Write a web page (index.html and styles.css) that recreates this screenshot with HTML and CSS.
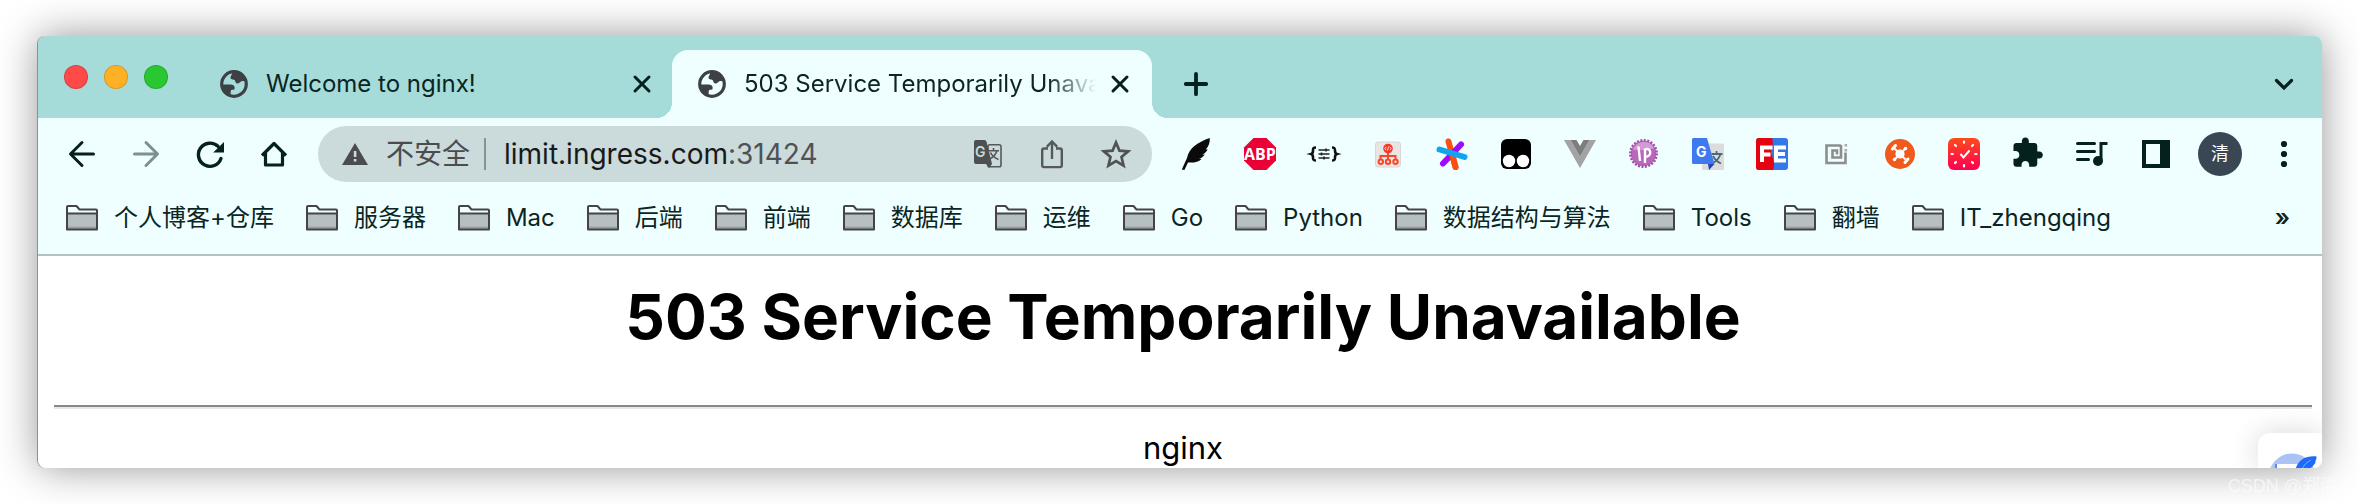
FILE: index.html
```
<!DOCTYPE html>
<html lang="zh-CN">
<head>
<meta charset="utf-8">
<title>503 Service Temporarily Unavailable</title>
<link rel="stylesheet" href="styles.css">
</head>
<body>
<svg class="defs" aria-hidden="true">
  <defs>
    <symbol id="globe" viewBox="0 0 28 28">
      <circle cx="14" cy="14" r="12.3" fill="none" stroke="#3d4044" stroke-width="3.2"/>
      <path fill="#3d4044" d="M12 1.500C13 4 11 5 10.500 7.500 10.500 9.500 13 9.500 14.500 10c1 .6.6 2.500 2 3.200 2 .8 3-.6 4.500-1.700 1.500-.8 4-.5 5.500.5C26 7 21 1.500 12 1.500z"/>
      <path fill="#3d4044" d="M1.500 14.500h9c2.500 0 4 1 4.200 3.200.2 1.700-1 2-2.500 2-1.400.1-1.500 1.200-1.500 2.300 0 1.500-.5 2-.2 4.500C5 26 1.200 20 1.500 14.500z"/>
    </symbol>
    <symbol id="cross" viewBox="0 0 40 40"><path d="M13 13l14 14M27 13L13 27" fill="none" stroke="#04211f" stroke-width="3" stroke-linecap="round"/></symbol>
    <symbol id="folder" viewBox="0 0 32 26">
      <path d="M1 8.500h30v15.500H1z" fill="#b7c0c0"/>
      <path d="M1 21.500h30v3H1z" fill="#9aa3a3"/>
      <path d="M1 24.500V2q0-1 1-1h8.500l3 3.500H30q1 0 1 1v19H1zM1 8.500h30" fill="none" stroke="#474449" stroke-width="2" stroke-linejoin="round"/>
    </symbol>
  </defs>
</svg>

<div class="window">
  <div class="tabstrip">
    <div class="lights">
      <button class="light red" aria-label="关闭窗口"></button>
      <button class="light yellow" aria-label="最小化"></button>
      <button class="light green" aria-label="全屏"></button>
    </div>
    <div class="tab idle">
      <svg class="favicon"><use href="#globe"/></svg>
      <span class="tab-title">Welcome to nginx!</span>
      <button class="close" aria-label="关闭标签页"><svg class="icon"><use href="#cross"/></svg></button>
    </div>
    <div class="tab active">
      <svg class="favicon"><use href="#globe"/></svg>
      <span class="tab-title">503 Service Temporarily Unavailable</span>
      <button class="close" aria-label="关闭标签页"><svg class="icon"><use href="#cross"/></svg></button>
    </div>
    <button class="tool add" aria-label="新标签页"><svg class="icon" viewBox="0 0 40 40"><path d="M20 9.800v20.400M9.800 20h20.400" stroke="#04211f" stroke-width="3.800" stroke-linecap="round"/></svg></button>
    <button class="tool" aria-label="搜索标签页"><svg class="icon" viewBox="0 0 40 40"><path d="M12.500 16.500l7.500 7.500 7.500-7.500" fill="none" stroke="#04211f" stroke-width="3.200" stroke-linecap="round"/></svg></button>
  </div>

  <div class="toolbar">
    <div class="group">
      <button class="tool" aria-label="后退"><svg class="icon" viewBox="0 0 40 40"><path d="M31.500 20H9M20 8.500L8.500 20 20 31.500" fill="none" stroke="#04211f" stroke-width="3" stroke-linecap="round" stroke-linejoin="round"/></svg></button>
      <button class="tool" aria-label="前进"><svg class="icon" viewBox="0 0 40 40"><path d="M8.500 20H31M20 8.500L31.500 20 20 31.500" fill="none" stroke="#7b918f" stroke-width="3" stroke-linecap="round" stroke-linejoin="round"/></svg></button>
      <button class="tool" aria-label="重新加载"><svg class="icon" viewBox="0 0 40 40"><path d="M31 24.500A11.600 11.600 0 1 1 28 12.300" fill="none" stroke="#04211f" stroke-width="3.400" stroke-linecap="round"/><path d="M34 8v10.500H23.200z" fill="#04211f"/></svg></button>
      <button class="tool" aria-label="主页"><svg class="icon" viewBox="0 0 40 40"><path d="M8 21.500L20 9.500l12 12M11.500 19v12h17V19" fill="none" stroke="#04211f" stroke-width="3.200" stroke-linejoin="round"/></svg></button>
    </div>

    <div class="address">
      <svg class="warn" viewBox="0 0 26 22"><path d="M13 0l13 22H0z" fill="#4b4c4f"/><path d="M11.800 8h2.600v6h-2.600zM11.800 16h2.600v2.600h-2.600z" fill="#cbdada"/></svg>
      <span class="secure">不安全</span>
      <span class="url" role="textbox" aria-label="地址栏" contenteditable="true" spellcheck="false">limit.ingress.com<span class="port">:31424</span></span>
      <button class="tool" aria-label="翻译"><svg class="icon" viewBox="0 0 40 40"><rect x="20" y="10.800" width="13" height="22" rx="1.800" fill="none" stroke="#56595b" stroke-width="1.600"/><path d="M8 6h8.500q1.500 0 2 1.500l5.500 22.500-3 4-3-4H8q-2 0-2-2V8q0-2 2-2z" fill="#4d5052"/><text x="7" y="22.500" font-size="14" font-weight="600" fill="#cbdada" class="glyph">G</text><path d="M20 16.800h11M25.500 14v2.800M28.800 17c-1.200 4-4 6.500-7.500 8.500M22.500 18.500c1.500 3.500 4 5.500 8 7" fill="none" stroke="#56595b" stroke-width="1.600"/></svg></button>
      <button class="tool" aria-label="分享"><svg class="icon" viewBox="0 0 40 40"><path d="M16 14.500h-4q-1.800 0-1.800 1.800v15q0 1.800 1.800 1.800h16q1.800 0 1.800-1.800v-15q0-1.800-1.800-1.800h-4M20 25V8M14.800 12.800L20 7.500l5.200 5.300" fill="none" stroke="#56595b" stroke-width="2.400"/></svg></button>
      <button class="tool" aria-label="收藏"><svg class="icon" viewBox="0 0 40 40"><path d="M20 8.500l3.400 8.100 8.800.7-6.700 5.700 2.100 8.600-7.600-4.600-7.600 4.600 2.100-8.600-6.700-5.700 8.800-.7z" fill="none" stroke="#505355" stroke-width="2.700"/></svg></button>
    </div>

    <div class="group">
      <button class="tool" aria-label="羽毛"><svg class="icon" viewBox="0 0 40 40"><path d="M33.800 4C22 8 13 14 11 24L5.800 35.500l2.600.5 3.600-7.500c6 .5 10.500-.5 13.500-3.500l-2.500-.3c2.500-.6 4-1.800 5.800-4.200l-2.700.1c2.500-1 4.500-2.600 5.600-5.300l-2 .2C32.800 12.500 34 8.500 33.800 4z" fill="#0a0a0a"/></svg></button>
      <button class="tool" aria-label="Adblock Plus"><svg class="icon" viewBox="0 0 40 40"><path d="M13.500 4h13L36 13.500v13L26.500 36h-13L4 26.500v-13z" fill="#eb0035"/><text x="20" y="26" text-anchor="middle" font-size="16" font-weight="700" fill="#fff" class="glyph narrow">ABP</text></svg></button>
      <button class="tool" aria-label="JSON"><svg class="icon" viewBox="0 0 40 40"><path d="M12 13.500c-3 0-3 1-3 3s0 3-1.800 3.500C9 20.500 9 21.500 9 23.500s0 3 3 3M28 13.500c3 0 3 1 3 3s0 3 1.800 3.500c-1.800.5-1.800 1.500-1.800 3.500s0 3-3 3" fill="none" stroke="#111" stroke-width="2.600"/><path d="M14.500 16h11M14.500 20h11M14.500 24h11M22 14.500v3M17.500 18.500v3M20 22.500v3" stroke="#222" stroke-width="1.600"/></svg></button>
      <button class="tool" aria-label="网站导航"><svg class="icon" viewBox="0 0 40 40"><rect x="7.500" y="8" width="25" height="25" rx="2.500" fill="#e9e5e4" stroke="#d6d6d6"/><g fill="none" stroke="#f4492a" stroke-width="2"><path d="M20 18v8M12.500 26v-4h15v4"/><circle cx="12.800" cy="27.800" r="2.200"/><circle cx="20" cy="27.800" r="2.200"/><circle cx="27.500" cy="27.800" r="2.200"/></g><circle cx="20" cy="14.500" r="4.800" fill="#f4392a"/><path d="M18.200 12.800L16.800 14.500l1.400 1.700M21.800 12.800l1.400 1.700-1.400 1.700M20.600 12.500l-1.200 4" stroke="#fff" stroke-width=".8" fill="none"/></svg></button>
      <button class="tool" aria-label="星形"><svg class="icon" viewBox="0 0 40 40"><g stroke-width="6" stroke-linecap="round"><path d="M16.500 7.500l7 25.500" stroke="#ff4e14"/><path d="M11 29.500L29 10.500" stroke="#9e09fb"/><path d="M20 20l3.500 13" stroke="#ff4e14"/><path d="M7.500 15.500L32.500 23" stroke="#13a4ee"/></g></svg></button>
      <button class="tool" aria-label="Tampermonkey"><svg class="icon" viewBox="0 0 40 40"><rect x="5" y="5" width="30" height="30" rx="6" fill="#000"/><circle cx="13" cy="27" r="6.200" fill="#fff"/><circle cx="27" cy="27" r="6.200" fill="#fff"/></svg></button>
      <button class="tool" aria-label="Vue"><svg class="icon" viewBox="0 0 40 40"><path d="M4 6h6.500L20 22.500 29.500 6H36L20 34z" fill="#a3a3a3"/><path d="M10.500 6h6L20 12l3.500-6h6L20 22.500z" fill="#7d7d7d"/></svg></button>
      <button class="tool" aria-label="IP"><svg class="icon" viewBox="0 0 40 40"><circle cx="19.500" cy="19.500" r="12.700" fill="#b966bb"/><circle cx="19.500" cy="19.500" r="13.200" fill="none" stroke="#a053a4" stroke-width="2.600" stroke-dasharray="2 1.450"/><path d="M9 16a11.500 11.500 0 0 1 21-2c-7 4-14 1-21 2z" fill="#d49ad5"/><path d="M14.500 12.500l1.500 14.500M21 29V15.500c6-2.500 8 7 0 7.500" fill="none" stroke="#fff" stroke-width="2.400"/></svg></button>
      <button class="tool" aria-label="谷歌翻译"><svg class="icon" viewBox="0 0 40 40"><rect x="14" y="9.500" width="22" height="26.500" rx="1.500" fill="#dcdcdc"/><path d="M23.500 20h11M28.500 17v3M32.500 20c-1.500 5-4 7-7.500 9M25 22c2 4 4.500 6 8 7.500" fill="none" stroke="#4c6b78" stroke-width="1.800"/><path d="M20 30h6.500l-5.500 6z" fill="#2246b5"/><path d="M5.500 4H19l7.500 26h-21Q4 30 4 28.500v-23Q4 4 5.500 4z" fill="#4079ee"/><text x="8" y="22.500" font-size="14" font-weight="700" fill="#fff" class="glyph">G</text></svg></button>
      <button class="tool" aria-label="FeHelper"><svg class="icon" viewBox="0 0 40 40"><rect x="4" y="4" width="32" height="32" rx="3" fill="#3377e8"/><path d="M7 4h13c3 8-3 12 0 18 2 5 3 9 1 14H7q-3 0-3-3V7q0-3 3-3z" fill="#e4030f"/><path d="M10 28V13.500h10.500M10 20.500h8.500M34 13.500H24v13h10M24 20h9" fill="none" stroke="#fff" stroke-width="4"/></svg></button>
      <button class="tool" aria-label="方框"><svg class="icon" viewBox="0 0 40 40"><path d="M25 11.500H10.500v17.500h19V18.500M25 11v12.500h-8.500v-7H21v4" fill="none" stroke="#8d8d8d" stroke-width="2.600"/><path d="M28.500 10h2.600v2.600h-2.600zM28.500 15h2.600v2.600h-2.600z" fill="#aaa"/></svg></button>
      <button class="tool" aria-label="无人机"><svg class="icon" viewBox="0 0 40 40"><circle cx="20" cy="20" r="15" fill="#f05a1c"/><circle cx="20" cy="20" r="4.600" fill="#fff"/><path d="M14.500 14.500l11 11M25.500 14.500l-11 11" stroke="#fff" stroke-width="2"/><path d="M12.500 15l3-3.500M25 28.500l3-3.500" stroke="#fff" stroke-width="3" stroke-linecap="round"/><circle cx="25.500" cy="14.500" r="1.800" fill="#fff"/><circle cx="14.500" cy="25.500" r="1.800" fill="#fff"/></svg></button>
      <button class="tool" aria-label="时钟"><svg class="icon" viewBox="0 0 40 40"><defs><linearGradient id="clock" x2="0" y2="1"><stop offset="0" stop-color="#ff4a1c"/><stop offset="1" stop-color="#fd0052"/></linearGradient></defs><rect x="4" y="4" width="32" height="32" rx="6" fill="url(#clock)"/><path d="M20 7.500v1.300M20 31.200v1.300M7.500 20h1.300M31.200 20h1.300M11 11l1 1M28 28l1 1M29 11l-1 1M12 28l-1 1" stroke="#fff" stroke-width="2.200" stroke-linecap="round"/><path d="M16.500 20l3 3.500 6-7" fill="none" stroke="#fff" stroke-width="2"/></svg></button>
      <button class="tool" aria-label="扩展程序"><svg class="icon" viewBox="-2 -1.500 30 30"><path fill="#04211f" transform="scale(1.050)" d="M20.500 11H19V7c0-1.100-.9-2-2-2h-4V3.500C13 2.120 11.880 1 10.500 1S8 2.120 8 3.500V5H4c-1.100 0-1.990.9-1.990 2v3.800H3.500c1.490 0 2.700 1.210 2.700 2.700s-1.210 2.700-2.700 2.700H2V20c0 1.100.9 2 2 2h3.800v-1.500c0-1.490 1.210-2.700 2.700-2.700 1.490 0 2.700 1.210 2.700 2.700V22H17c1.100 0 2-.9 2-2v-4h1.500c1.380 0 2.500-1.120 2.500-2.500S21.880 11 20.500 11z"/></svg></button>
      <button class="tool" aria-label="媒体控制"><svg class="icon" viewBox="0 0 40 40"><path d="M5.500 9.500h17M5.500 17.500h17M5.500 25.500h11" stroke="#04211f" stroke-width="3" stroke-linecap="round"/><path d="M35.500 9.500H29V26" fill="none" stroke="#04211f" stroke-width="3"/><circle cx="26" cy="27" r="5" fill="#04211f"/></svg></button>
      <button class="tool" aria-label="侧边栏"><svg class="icon" viewBox="0 0 40 40"><path fill="#04211f" fill-rule="evenodd" d="M6 6h28v28H6zM10 10v20h14V10z"/></svg></button>
      <button class="tool" aria-label="个人资料"><span class="avatar">清</span></button>
      <button class="tool" aria-label="菜单"><svg class="icon" viewBox="0 0 40 40"><g fill="#04211f"><circle cx="20" cy="10" r="3.100"/><circle cx="20" cy="20" r="3.100"/><circle cx="20" cy="30" r="3.100"/></g></svg></button>
    </div>
  </div>

  <nav class="bookmarks" aria-label="书签栏">
    <a href="#"><svg class="folder"><use href="#folder"/></svg>个人博客+仓库</a>
    <a href="#"><svg class="folder"><use href="#folder"/></svg>服务器</a>
    <a href="#"><svg class="folder"><use href="#folder"/></svg>Mac</a>
    <a href="#"><svg class="folder"><use href="#folder"/></svg>后端</a>
    <a href="#"><svg class="folder"><use href="#folder"/></svg>前端</a>
    <a href="#"><svg class="folder"><use href="#folder"/></svg>数据库</a>
    <a href="#"><svg class="folder"><use href="#folder"/></svg>运维</a>
    <a href="#"><svg class="folder"><use href="#folder"/></svg>Go</a>
    <a href="#"><svg class="folder"><use href="#folder"/></svg>Python</a>
    <a href="#"><svg class="folder"><use href="#folder"/></svg>数据结构与算法</a>
    <a href="#"><svg class="folder"><use href="#folder"/></svg>Tools</a>
    <a href="#"><svg class="folder"><use href="#folder"/></svg>翻墙</a>
    <a href="#"><svg class="folder"><use href="#folder"/></svg>IT_zhengqing</a>
    <button class="more" aria-label="更多书签">»</button>
  </nav>

  <main class="page">
    <h1>503 Service Temporarily Unavailable</h1>
    <hr>
    <p>nginx</p>
    <div class="widget">
      <svg viewBox="0 0 64 36"><defs><linearGradient id="disc" x2="0" y2="1"><stop offset="0" stop-color="#a9c0f4"/><stop offset="1" stop-color="#c3d2f7"/></linearGradient></defs><circle cx="34" cy="44" r="23.500" fill="url(#disc)"/><path d="M18 31h26v5H18z" fill="#fff"/><path d="M17 31h2v5h-2z" fill="#5f86ee"/><path d="M58.500 23.500c-10-1-18 3-21 12.500h13c5-2 4.500-4 7-6-1-1 1.500-4 1-6.500z" fill="#1d6bf8"/><path d="M53 27c-4 2-7 5-9 9" fill="none" stroke="#7fb0ff"/></svg>
    </div>
  </main>
</div>
<div class="watermark">CSDN @郑清</div>
</body>
</html>
```

FILE: styles.css
```
* {
  box-sizing: border-box;
}

body {
  margin: 0;
  height: 100vh;
  padding: 36px 36px 36px 38px;
  display: flex;
  background: #fff;
  color: #0a2523;
  font-family: Inter, "Noto Sans CJK SC", sans-serif;
  font-size: 24px;
  line-height: 32px;
  overflow: hidden;
}

button {
  margin: 0;
  padding: 0;
  border: 0;
  background: none;
  color: inherit;
  font: inherit;
}

.defs {
  position: absolute;
  width: 0;
  height: 0;
}

.window {
  flex: 1;
  min-width: 0;
  display: flex;
  flex-direction: column;
  border-radius: 8px;
  overflow: hidden;
  background: #efffff;
  box-shadow: -1px 0 0 #8f8f8f, 0 0 40px rgba(0, 0, 0, 0.42);
}

.tabstrip {
  display: flex;
  height: 82px;
  padding: 14px 6px 0 26px;
  background: #a5dbd8;
}

.lights {
  display: flex;
  gap: 16px;
  width: 130px;
  padding-top: 15px;
}

.light {
  width: 24px;
  height: 24px;
  border: 1px solid rgba(0, 0, 0, 0.14);
  border-radius: 50%;
}

.red { background: #ff4a4a; }
.yellow { background: #ffb126; }
.green { background: #29c732; }

.tab {
  display: flex;
  align-items: center;
  width: 480px;
  padding: 0 12px 0 26px;
}

.idle {
  width: 478px;
  padding-right: 10px;
}

.active {
  position: relative;
  border-radius: 16px 16px 0 0;
  background: #efffff;
}

.active::before,
.active::after {
  content: "";
  position: absolute;
  bottom: 0;
  width: 16px;
  height: 16px;
}

.active::before {
  right: 100%;
  background: radial-gradient(circle at 0 0, transparent 16px, #efffff 16px);
}

.active::after {
  left: 100%;
  background: radial-gradient(circle at 100% 0, transparent 16px, #efffff 16px);
}

.favicon {
  flex: none;
  width: 28px;
  height: 28px;
}

.tab-title {
  flex: 1;
  min-width: 0;
  margin-left: 18px;
  margin-right: 4px;
  overflow: hidden;
  white-space: nowrap;
}

.active .tab-title {
  -webkit-mask-image: linear-gradient(to left, transparent, #000 48px);
  mask-image: linear-gradient(to left, transparent, #000 48px);
}

.close,
.icon {
  display: block;
  flex: none;
  width: 40px;
  height: 40px;
}

.tool {
  flex: none;
  width: 64px;
  display: flex;
  align-items: center;
  justify-content: center;
}

.add {
  margin-left: 12px;
  margin-right: auto;
}

.toolbar {
  display: flex;
  align-items: center;
  gap: 12px;
  height: 72px;
  padding: 0 6px 0 12px;
}

.group {
  display: flex;
  align-items: center;
}

.address {
  flex: 1;
  min-width: 0;
  display: flex;
  align-items: center;
  height: 56px;
  padding: 0 4px 0 24px;
  border-radius: 28px;
  background: #cbdada;
  font-size: 28px;
}

.warn {
  flex: none;
  width: 26px;
  height: 22px;
}

.secure {
  margin-left: 18px;
  padding-right: 14px;
  border-right: 2px solid #879392;
  color: #4b4c4f;
}

.url {
  flex: 1;
  min-width: 0;
  margin-left: 18px;
  color: #17191b;
  white-space: nowrap;
  outline: 0;
}

.port {
  color: #4f5254;
}

.glyph {
  font-family: Inter, sans-serif;
}

.narrow {
  font-family: "Open Sans", sans-serif;
}

.avatar {
  width: 44px;
  height: 44px;
  border-radius: 50%;
  background: #384753;
  color: #fff;
  font-size: 18px;
  line-height: 44px;
}

.bookmarks {
  display: flex;
  align-items: center;
  gap: 32px;
  height: 66px;
  padding: 0 32px 8px 28px;
  border-bottom: 2px solid #adc4c2;
}

.bookmarks a {
  display: flex;
  align-items: center;
  gap: 16px;
  color: inherit;
  text-decoration: none;
  white-space: nowrap;
}

.folder {
  width: 32px;
  height: 26px;
}

.more {
  margin-left: auto;
  font-weight: 600;
}

.page {
  position: relative;
  flex: 1;
  padding: 18px 10px 0 16px;
  overflow: hidden;
  background: #fff;
  color: #000;
  text-align: center;
}

h1 {
  margin: 0 0 45px;
  font-size: 62px;
  font-weight: 700;
  line-height: 86px;
}

hr {
  margin: 0 0 20px;
  border: 0;
  border-top: 2px solid #888;
  border-bottom: 2px solid #e8e8e8;
}

p {
  margin: 0;
  font-size: 31px;
  line-height: 38px;
}

.widget {
  position: absolute;
  right: 0;
  bottom: 0;
  width: 64px;
  height: 35px;
  border-radius: 12px 0 0 0;
  background: #fff;
  box-shadow: 0 0 28px rgba(0, 0, 0, 0.16);
}

.widget svg {
  display: block;
}

.watermark {
  position: absolute;
  right: 20px;
  bottom: 4px;
  color: rgba(255, 255, 255, 0.6);
  font-family: "Liberation Sans", "Noto Sans CJK SC", sans-serif;
  font-size: 18px;
  line-height: 28px;
}
```
